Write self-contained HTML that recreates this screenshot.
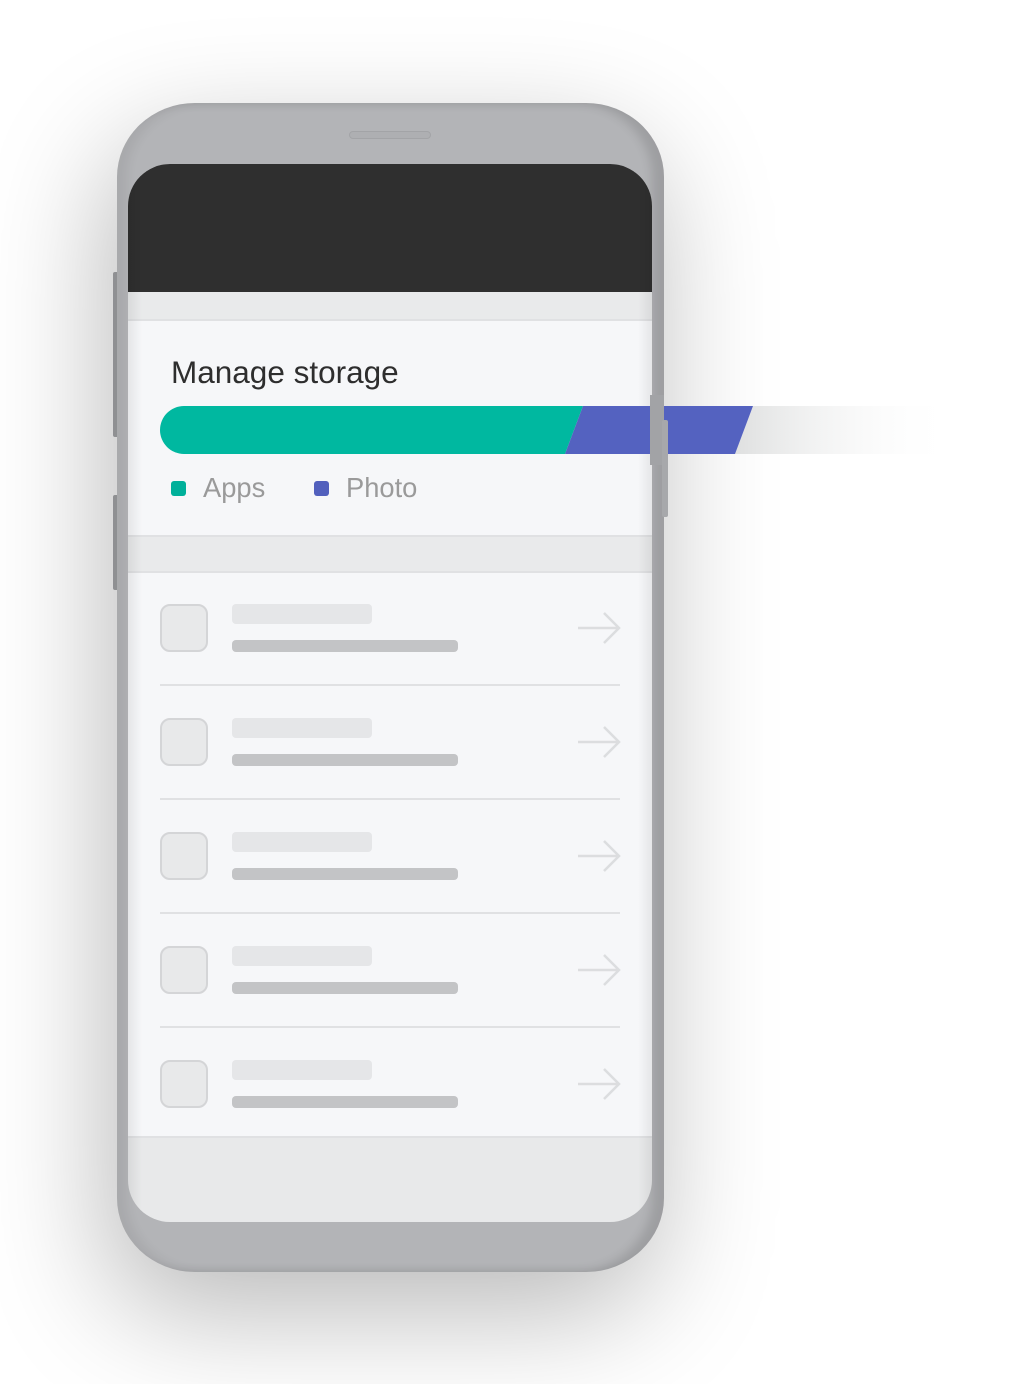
<!DOCTYPE html>
<html><head><meta charset="utf-8"><style>
*{margin:0;padding:0;box-sizing:border-box}
body{width:1024px;height:1384px;background:#fff;position:relative;overflow:hidden;font-family:"Liberation Sans",Arial,sans-serif}
.a{position:absolute}
.phone{left:117px;top:103px;width:547px;height:1169px;border-radius:78px/74px;background:#b3b4b7;box-shadow:-10px 40px 120px rgba(0,0,0,.28),inset -12px 0 10px rgba(0,0,0,.12),inset 10px 0 10px rgba(0,0,0,.06)}
.screen{left:128px;top:164px;width:524px;height:1058px;border-radius:42px;background:#e8e9ea;overflow:hidden}
.btn{background:#a9aaad;border-radius:2px}
.row .ic{left:160px;width:48px;height:48px;border-radius:10px;background:#e8e9ea;border:2px solid #d4d5d7}
.b1{left:232px;width:140px;height:20px;border-radius:4px;background:#e5e6e8}
.b2{left:232px;width:226px;height:12px;border-radius:4px;background:#c3c4c6}
.div{left:160px;width:460px;height:2px;background:#e0e1e3}
</style></head><body>
<div class="a btn" style="left:113px;top:272px;width:6px;height:165px"></div>
<div class="a btn" style="left:113px;top:495px;width:6px;height:95px"></div>
<div class="a phone"></div>
<div class="a" style="left:349px;top:131px;width:82px;height:8px;border-radius:4px;background:#aeafb2;border:1px solid #a3a4a7"></div>
<div class="a screen">
  <div class="a" style="left:0;top:0;width:524px;height:128px;background:#2f2f2f"></div>
  <div class="a" style="left:0;top:128px;width:524px;height:29px;background:#e9eaeb;border-bottom:2px solid #e0e1e3"></div>
  <div class="a" style="left:0;top:157px;width:524px;height:214px;background:#f6f7f9"></div>
  <div class="a" style="left:0;top:371px;width:524px;height:38px;background:#e9eaeb;border-top:2px solid #e0e1e3;border-bottom:2px solid #e0e1e3"></div>
  <div class="a" style="left:0;top:409px;width:524px;height:565px;background:#f6f7f9;border-bottom:2px solid #e0e1e3"></div>
  <div class="a" style="left:0;top:0;width:14px;height:1058px;background:linear-gradient(90deg,rgba(0,0,0,.07),rgba(0,0,0,0))"></div>
  <div class="a" style="right:0;top:0;width:14px;height:1058px;background:linear-gradient(270deg,rgba(0,0,0,.07),rgba(0,0,0,0))"></div>
</div>
<div class="a" style="left:171px;top:352px;font-size:31.5px;color:#2e2e2e;line-height:40px">Manage storage</div>
<svg class="a" style="left:0;top:0" width="1024" height="1384">
  <defs><linearGradient id="g" x1="0" x2="1"><stop offset="0" stop-color="#dfe0e0"/><stop offset="1" stop-color="#fff" stop-opacity="0"/></linearGradient></defs>
  <polygon points="753,406 955,406 955,454 735,454" fill="url(#g)"/>
  <path d="M184,406 H583 L565,454 H184 A24,24 0 0 1 184,406 Z" fill="#00b8a0"/>
  <polygon points="583,406 753,406 735,454 565,454" fill="#5462c0"/>
</svg>
<div class="a" style="left:650px;top:395px;width:14px;height:70px;background:#a2a3a6"></div>
<div class="a btn" style="left:662px;top:420px;width:6px;height:97px;background:#a7a8ab"></div>
<div class="a" style="left:171px;top:481px;width:15px;height:15px;border-radius:3px;background:#00b09a"></div>
<div class="a" style="left:203px;top:472px;font-size:27.3px;color:#9a9a9a;line-height:32px">Apps</div>
<div class="a" style="left:314px;top:481px;width:15px;height:15px;border-radius:3px;background:#5260bd"></div>
<div class="a" style="left:346px;top:472px;font-size:27.3px;color:#9a9a9a;line-height:32px">Photo</div>

<div class="row">
<div class="a ic" style="top:604px"></div><div class="a b1" style="top:604px"></div><div class="a b2" style="top:640px"></div>
<div class="a div" style="top:684px"></div>
<div class="a ic" style="top:718px"></div><div class="a b1" style="top:718px"></div><div class="a b2" style="top:754px"></div>
<div class="a div" style="top:798px"></div>
<div class="a ic" style="top:832px"></div><div class="a b1" style="top:832px"></div><div class="a b2" style="top:868px"></div>
<div class="a div" style="top:912px"></div>
<div class="a ic" style="top:946px"></div><div class="a b1" style="top:946px"></div><div class="a b2" style="top:982px"></div>
<div class="a div" style="top:1026px"></div>
<div class="a ic" style="top:1060px"></div><div class="a b1" style="top:1060px"></div><div class="a b2" style="top:1096px"></div>
</div>
<svg class="a" style="left:0;top:0" width="1024" height="1384" fill="none" stroke="#dcdddf" stroke-width="2.5">
  <path d="M578,628 H618 M604,613 L619,628 L604,643"/>
  <path d="M578,742 H618 M604,727 L619,742 L604,757"/>
  <path d="M578,856 H618 M604,841 L619,856 L604,871"/>
  <path d="M578,970 H618 M604,955 L619,970 L604,985"/>
  <path d="M578,1084 H618 M604,1069 L619,1084 L604,1099"/>
</svg>
</body></html>
